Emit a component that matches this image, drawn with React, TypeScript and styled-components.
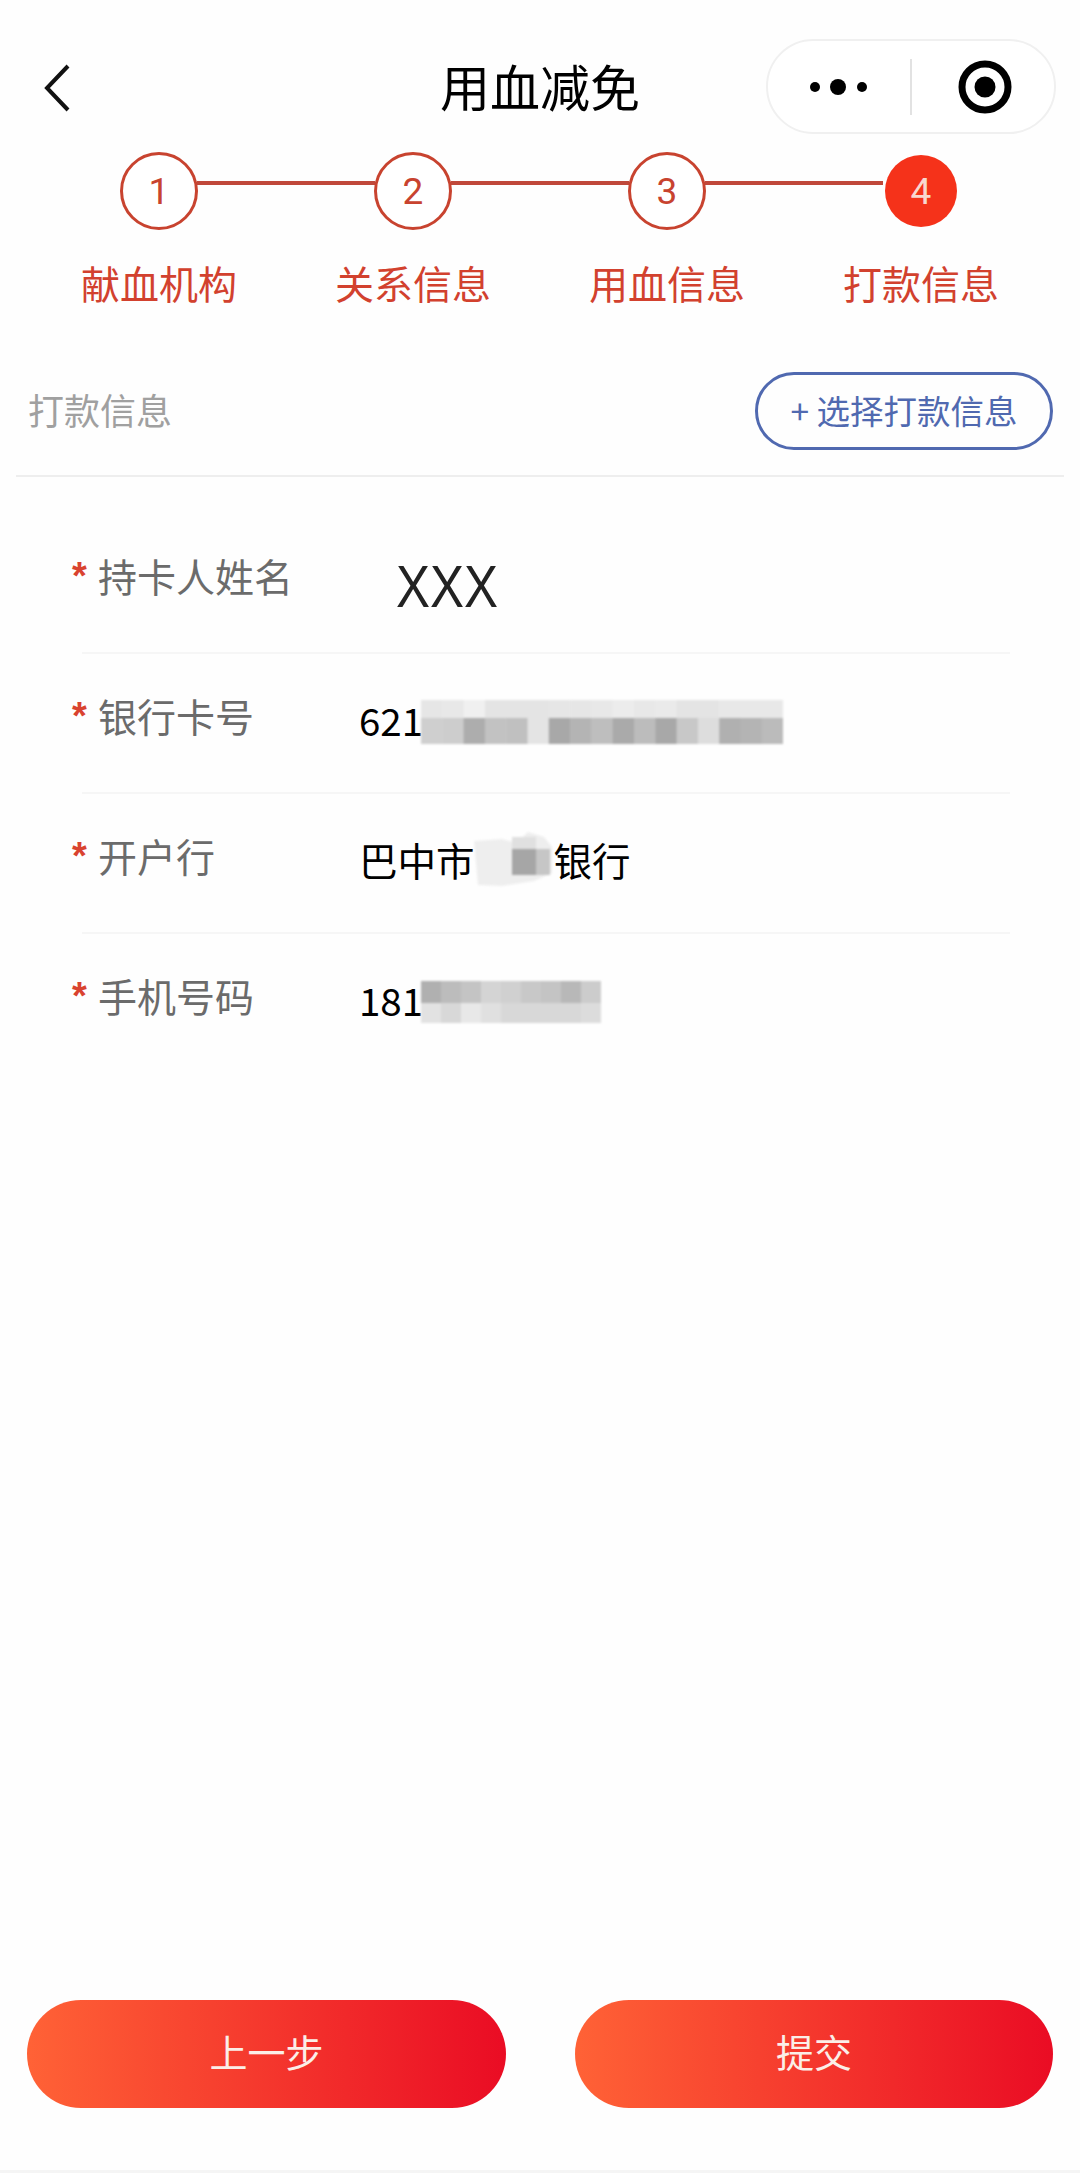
import { createGlobalStyle } from 'styled-components';
import styled from 'styled-components';

const cjk = `'Noto Sans CJK SC', 'Liberation Sans', sans-serif`;

const steps = ['献血机构', '关系信息', '用血信息', '打款信息'];

// each mosaic: two rows of grey cells over the masked digits
const cardMosaic = [
  ['#e6e6e6', '#e8e8e8', '#f0f0f0', '#e4e4e4', '#e4e4e4', '#e4e4e4', '#e6e6e6', '#e6e6e6', '#e8e8e8', '#ececec', '#e8e8e8', '#eaeaea', '#e4e4e4', '#e4e4e4', '#e8e8e8', '#e8e8e8', '#e8e8e8'],
  ['#cfcfcf', '#cdcdcd', '#adadad', '#c2c2c2', '#c0c0c0', '#e4e4e4', '#a8a8a8', '#b4b4b4', '#bebebe', '#aaaaaa', '#bcbcbc', '#a8a8a8', '#c8c8c8', '#dddddd', '#b0b0b0', '#b4b4b4', '#bbbbbb'],
];
const phoneMosaic = [
  ['#b0b0b0', '#bcbcbc', '#c4c4c4', '#d4d4d4', '#d0d0d0', '#c8c8c8', '#c4c4c4', '#b8b8b8', '#cccccc'],
  ['#e2e2e2', '#d8d8d8', '#e8e8e8', '#e0e0e0', '#d8d8d8', '#d8d8d8', '#d8d8d8', '#d8d8d8', '#dcdcdc'],
];

function Mosaic({ rows, cell, heights }: { rows: string[][]; cell: number; heights: number[] }) {
  return (
    <MosaicSvg width={rows[0].length * cell} height={heights[0] + heights[1]}>
      {rows.map((row, y) =>
        row.map((fill, x) => (
          <rect
            key={`${x}-${y}`}
            x={x * cell}
            y={y === 0 ? 0 : heights[0]}
            width={cell + 0.5}
            height={heights[y] + 0.5}
            fill={fill}
          />
        )),
      )}
    </MosaicSvg>
  );
}

function BankMosaic() {
  return (
    <BankSvg width="82" height="56" viewBox="0 0 82 56">
      <path d="M2 10 L30 8 L44 12 L56 1 L72 6 L80 16 L80 42 L62 50 L30 55 L6 54 Z" fill="#eeeeee" />
      <rect x="40" y="18" width="24" height="26" fill="#a6a6a6" />
      <rect x="64" y="18" width="14" height="26" fill="#c6c6c6" />
      <rect x="40" y="6" width="24" height="12" fill="#e0e0e0" />
    </BankSvg>
  );
}

export default function App() {
  return (
    <Page>
      <GlobalStyle />
      <Nav>
        <BackButton>
          <svg width="26" height="48" viewBox="0 0 26 48" fill="none">
            <path d="M24 2 L3 24 L24 46" stroke="#111" strokeWidth="4" />
          </svg>
        </BackButton>
        <Title>用血减免</Title>
        <NavRight>
          <Capsule>
            <CapsuleSide>
              <svg width="58" height="20" viewBox="0 0 58 20">
                <circle cx="5" cy="10" r="5" fill="#000" />
                <circle cx="28" cy="10" r="8" fill="#000" />
                <circle cx="52" cy="10" r="5" fill="#000" />
              </svg>
            </CapsuleSide>
            <CapsuleDivider />
            <TargetSide>
              <svg width="54" height="54" viewBox="0 0 54 54" fill="none">
                <circle cx="27" cy="27" r="23" stroke="#000" strokeWidth="7" />
                <circle cx="27" cy="27" r="10.5" fill="#000" />
              </svg>
            </TargetSide>
          </Capsule>
        </NavRight>
      </Nav>

      <Stepper>
        {steps.map((label, i) => (
          <Step key={label} $last={i === steps.length - 1}>
            <StepCircle $active={i === steps.length - 1}>{i + 1}</StepCircle>
            <StepLabel>{label}</StepLabel>
          </Step>
        ))}
      </Stepper>

      <SectionHead>
        <SectionTitle>打款信息</SectionTitle>
        <PickButton>+ 选择打款信息</PickButton>
      </SectionHead>

      <Form>
        <Row>
          <Label><Star>*</Star>持卡人姓名</Label>
          <NameValue>XXX</NameValue>
        </Row>
        <Row>
          <Label><Star>*</Star>银行卡号</Label>
          <Value>621<Mosaic rows={cardMosaic} cell={21.3} heights={[18, 26]} /></Value>
        </Row>
        <Row>
          <Label><Star>*</Star>开户行</Label>
          <Value>巴中市<BankMosaic />银行</Value>
        </Row>
        <Row $plain>
          <Label><Star>*</Star>手机号码</Label>
          <Value>181<Mosaic rows={phoneMosaic} cell={20} heights={[22, 20]} /></Value>
        </Row>
      </Form>

      <Footer>
        <ActionButton>上一步</ActionButton>
        <ActionButton>提交</ActionButton>
      </Footer>
    </Page>
  );
}

const GlobalStyle = createGlobalStyle`
  html, body {
    margin: 0;
    padding: 0;
    background: #fff;
  }
`;

const Page = styled.div`
  width: 1080px;
  height: 2173px;
  box-sizing: border-box;
  display: flex;
  flex-direction: column;
  background: #fefefe;
  border-bottom: 3px solid #f5f5f5;
  font-family: ${cjk};
  overflow: hidden;
`;

const Nav = styled.div`
  display: grid;
  grid-template-columns: 1fr auto 1fr;
  align-items: center;
  height: 95px;
  margin-top: 39px;
`;

const BackButton = styled.div`
  display: flex;
  padding-left: 44px;
  margin-top: 2px;
`;

const Title = styled.div`
  font-size: 50px;
  line-height: 60px;
  color: #000;
  margin-top: -4px;
`;

const NavRight = styled.div`
  display: flex;
  justify-content: flex-end;
  padding-right: 24px;
`;

const Capsule = styled.div`
  width: 290px;
  height: 95px;
  box-sizing: border-box;
  display: grid;
  grid-template-columns: 1fr 2px 1fr;
  align-items: center;
  border: 2px solid #f0f0f0;
  border-radius: 48px;
  background: #fff;
`;

const CapsuleSide = styled.div`
  display: flex;
  justify-content: center;
  align-items: center;
`;

const TargetSide = styled(CapsuleSide)`
  padding-left: 4px;
`;

const CapsuleDivider = styled.div`
  height: 56px;
  background: #e2e2e2;
`;

const Stepper = styled.div`
  display: grid;
  grid-template-columns: repeat(4, 254px);
  padding: 18px 0 0 32px;
`;

const Step = styled.div<{ $last?: boolean }>`
  position: relative;
  display: flex;
  flex-direction: column;
  align-items: center;

  &::after {
    content: '';
    display: ${(p) => (p.$last ? 'none' : 'block')};
    position: absolute;
    top: 29px;
    left: 165px;
    width: 178px;
    height: 4px;
    background: #c0483a;
  }
`;

const StepCircle = styled.div<{ $active?: boolean }>`
  width: ${(p) => (p.$active ? '72px' : '78px')};
  height: ${(p) => (p.$active ? '72px' : '78px')};
  margin: ${(p) => (p.$active ? '3px 0' : '0')};
  box-sizing: border-box;
  display: flex;
  align-items: center;
  justify-content: center;
  border-radius: 50%;
  border: ${(p) => (p.$active ? 'none' : '3px solid #c8432f')};
  background: ${(p) => (p.$active ? '#f5321a' : '#fff')};
  color: ${(p) => (p.$active ? '#f8d8d0' : '#c8432f')};
  font-family: Roboto, 'Liberation Sans', sans-serif;
  font-size: 37px;
  font-weight: 400;
`;

const StepLabel = styled.div`
  margin-top: 27px;
  font-size: 39px;
  line-height: 50px;
  color: #d2412e;
`;

const SectionHead = styled.div`
  display: flex;
  justify-content: space-between;
  align-items: center;
  margin: 65px 16px 0;
  padding: 0 11px 25px 12px;
  border-bottom: 2px solid #eeeeee;
`;

const SectionTitle = styled.div`
  padding-bottom: 4px;
  font-size: 36px;
  line-height: 50px;
  color: #a0a0a0;
`;

const PickButton = styled.div`
  width: 298px;
  height: 78px;
  box-sizing: border-box;
  padding-bottom: 4px;
  display: flex;
  align-items: center;
  justify-content: center;
  border: 3px solid #5069b0;
  border-radius: 39px;
  font-size: 33.5px;
  color: #5069b0;
  white-space: nowrap;
`;

const Form = styled.div`
  display: flex;
  flex-direction: column;
  margin: 37px 70px 0 82px;
`;

const Row = styled.div<{ $plain?: boolean }>`
  display: flex;
  align-items: flex-start;
  height: 140px;
  padding-top: 36px;
  box-sizing: border-box;
  border-bottom: ${(p) => (p.$plain ? 'none' : '2px solid #f6f6f6')};
`;

const Label = styled.div`
  display: flex;
  width: 287px;
  flex: none;
  margin-left: -10px;
  font-size: 39px;
  line-height: 50px;
  color: #6b6b6b;
`;

const Star = styled.span`
  width: 26px;
  margin-top: 1px;
  color: #d9432f;
  font-family: 'Liberation Sans', sans-serif;
  font-weight: 700;
  font-size: 38px;
`;

const Value = styled.div`
  display: flex;
  align-items: center;
  height: 50px;
  margin-top: 4px;
  font-size: 38.5px;
  line-height: 50px;
  color: #000;
  white-space: nowrap;
`;

const NameValue = styled.div`
  margin: 12px 0 0 37px;
  font-family: 'Liberation Sans', sans-serif;
  font-size: 60px;
  line-height: 50px;
  color: #222;
  transform: scaleX(0.85);
  transform-origin: left center;
`;

const MosaicSvg = styled.svg`
  flex: none;
  margin: 5px 0 0 -2px;
  filter: blur(0.8px);
`;

const BankSvg = styled.svg`
  flex: none;
  margin-left: -3px;
  filter: blur(0.8px);
`;

const Footer = styled.div`
  display: grid;
  grid-template-columns: 479px 478px;
  justify-content: space-between;
  margin-top: auto;
  margin-bottom: 62px;
  padding: 0 27px;
`;

const ActionButton = styled.div`
  height: 108px;
  box-sizing: border-box;
  padding-bottom: 7px;
  display: flex;
  align-items: center;
  justify-content: center;
  border-radius: 54px;
  background: linear-gradient(90deg, #ff6236, #ea0c24);
  color: #fbeee8;
  font-size: 38px;
`;
